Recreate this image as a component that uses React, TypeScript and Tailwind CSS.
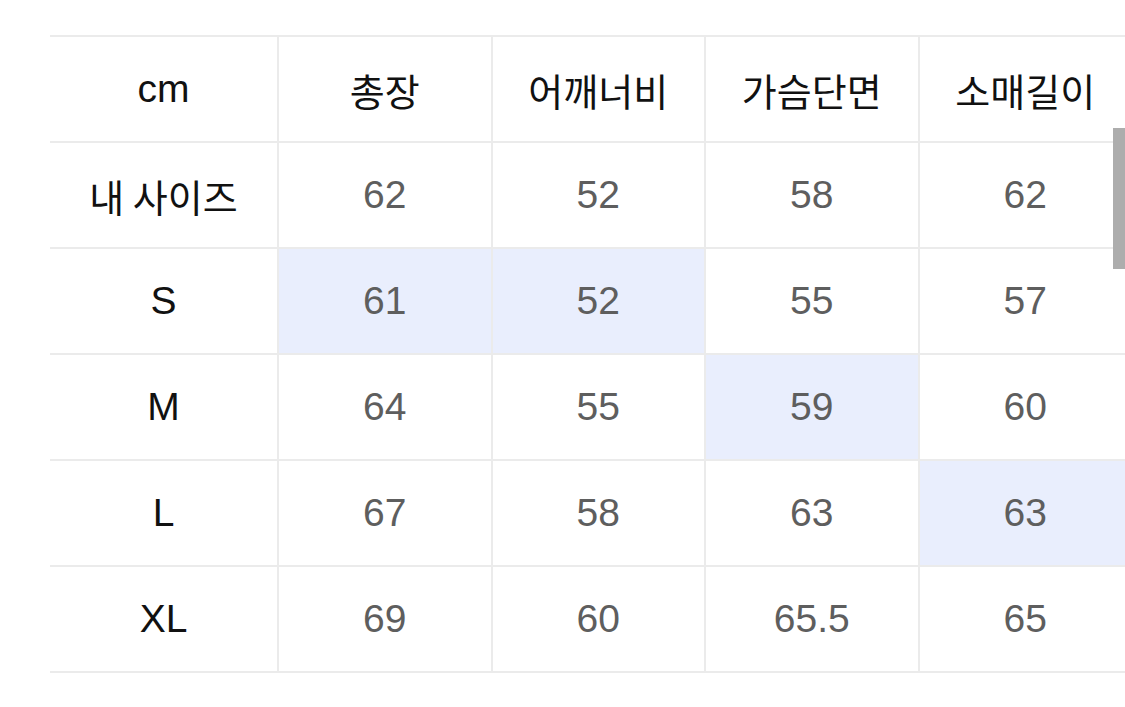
const headers = ["총장", "어깨너비", "가슴단면", "소매길이"];

interface SizeRow {
  label: string;
  korean?: boolean;
  values: string[];
  highlight: number[];
}

const rows: SizeRow[] = [
  { label: "내 사이즈", korean: true, values: ["62", "52", "58", "62"], highlight: [] },
  { label: "S", values: ["61", "52", "55", "57"], highlight: [0, 1] },
  { label: "M", values: ["64", "55", "59", "60"], highlight: [2] },
  { label: "L", values: ["67", "58", "63", "63"], highlight: [3] },
  { label: "XL", values: ["69", "60", "65.5", "65"], highlight: [] },
];

const latin = "font-['Liberation_Sans','Noto_Sans_CJK_KR',sans-serif] text-[39px]";
const hangul = "font-['Noto_Sans_CJK_KR',sans-serif] text-[38px] font-normal";

const App = () => {
  return (
    <div className="relative w-[1125px] h-[707px] overflow-hidden bg-white">
      <div className="pl-[50px] pt-[35px]">
        <div className="grid grid-cols-[227px_213.5px_213.5px_213.5px_213.5px] w-[1081px] border-t-2 border-[#ebebeb]">
          <div className={`h-[106px] flex items-center justify-center border-b-2 border-[#ebebeb] text-[#111] ${latin}`}>
            cm
          </div>
          {headers.map((h) => (
            <div
              key={h}
              className={`h-[106px] flex items-center justify-center border-b-2 border-l-2 border-[#ebebeb] text-[#111] ${hangul}`}
            >
              {h}
            </div>
          ))}
          {rows.map((row) => (
            <div key={row.label} className="contents">
              <div
                className={`h-[106px] flex items-center justify-center border-b-2 border-[#ebebeb] text-[#111] ${
                  row.korean ? hangul : latin
                }`}
              >
                {row.label}
              </div>
              {row.values.map((v, i) => (
                <div
                  key={i}
                  className={`h-[106px] flex items-center justify-center border-b-2 border-l-2 border-[#ebebeb] text-[#5e5e5e] ${latin} ${
                    row.highlight.includes(i) ? "bg-[#e9eefd]" : "bg-white"
                  }`}
                >
                  {v}
                </div>
              ))}
            </div>
          ))}
        </div>
      </div>
      <div className="absolute right-0 top-[128px] w-[12px] h-[141px] bg-[#adadad]" />
    </div>
  );
};

export default App;
